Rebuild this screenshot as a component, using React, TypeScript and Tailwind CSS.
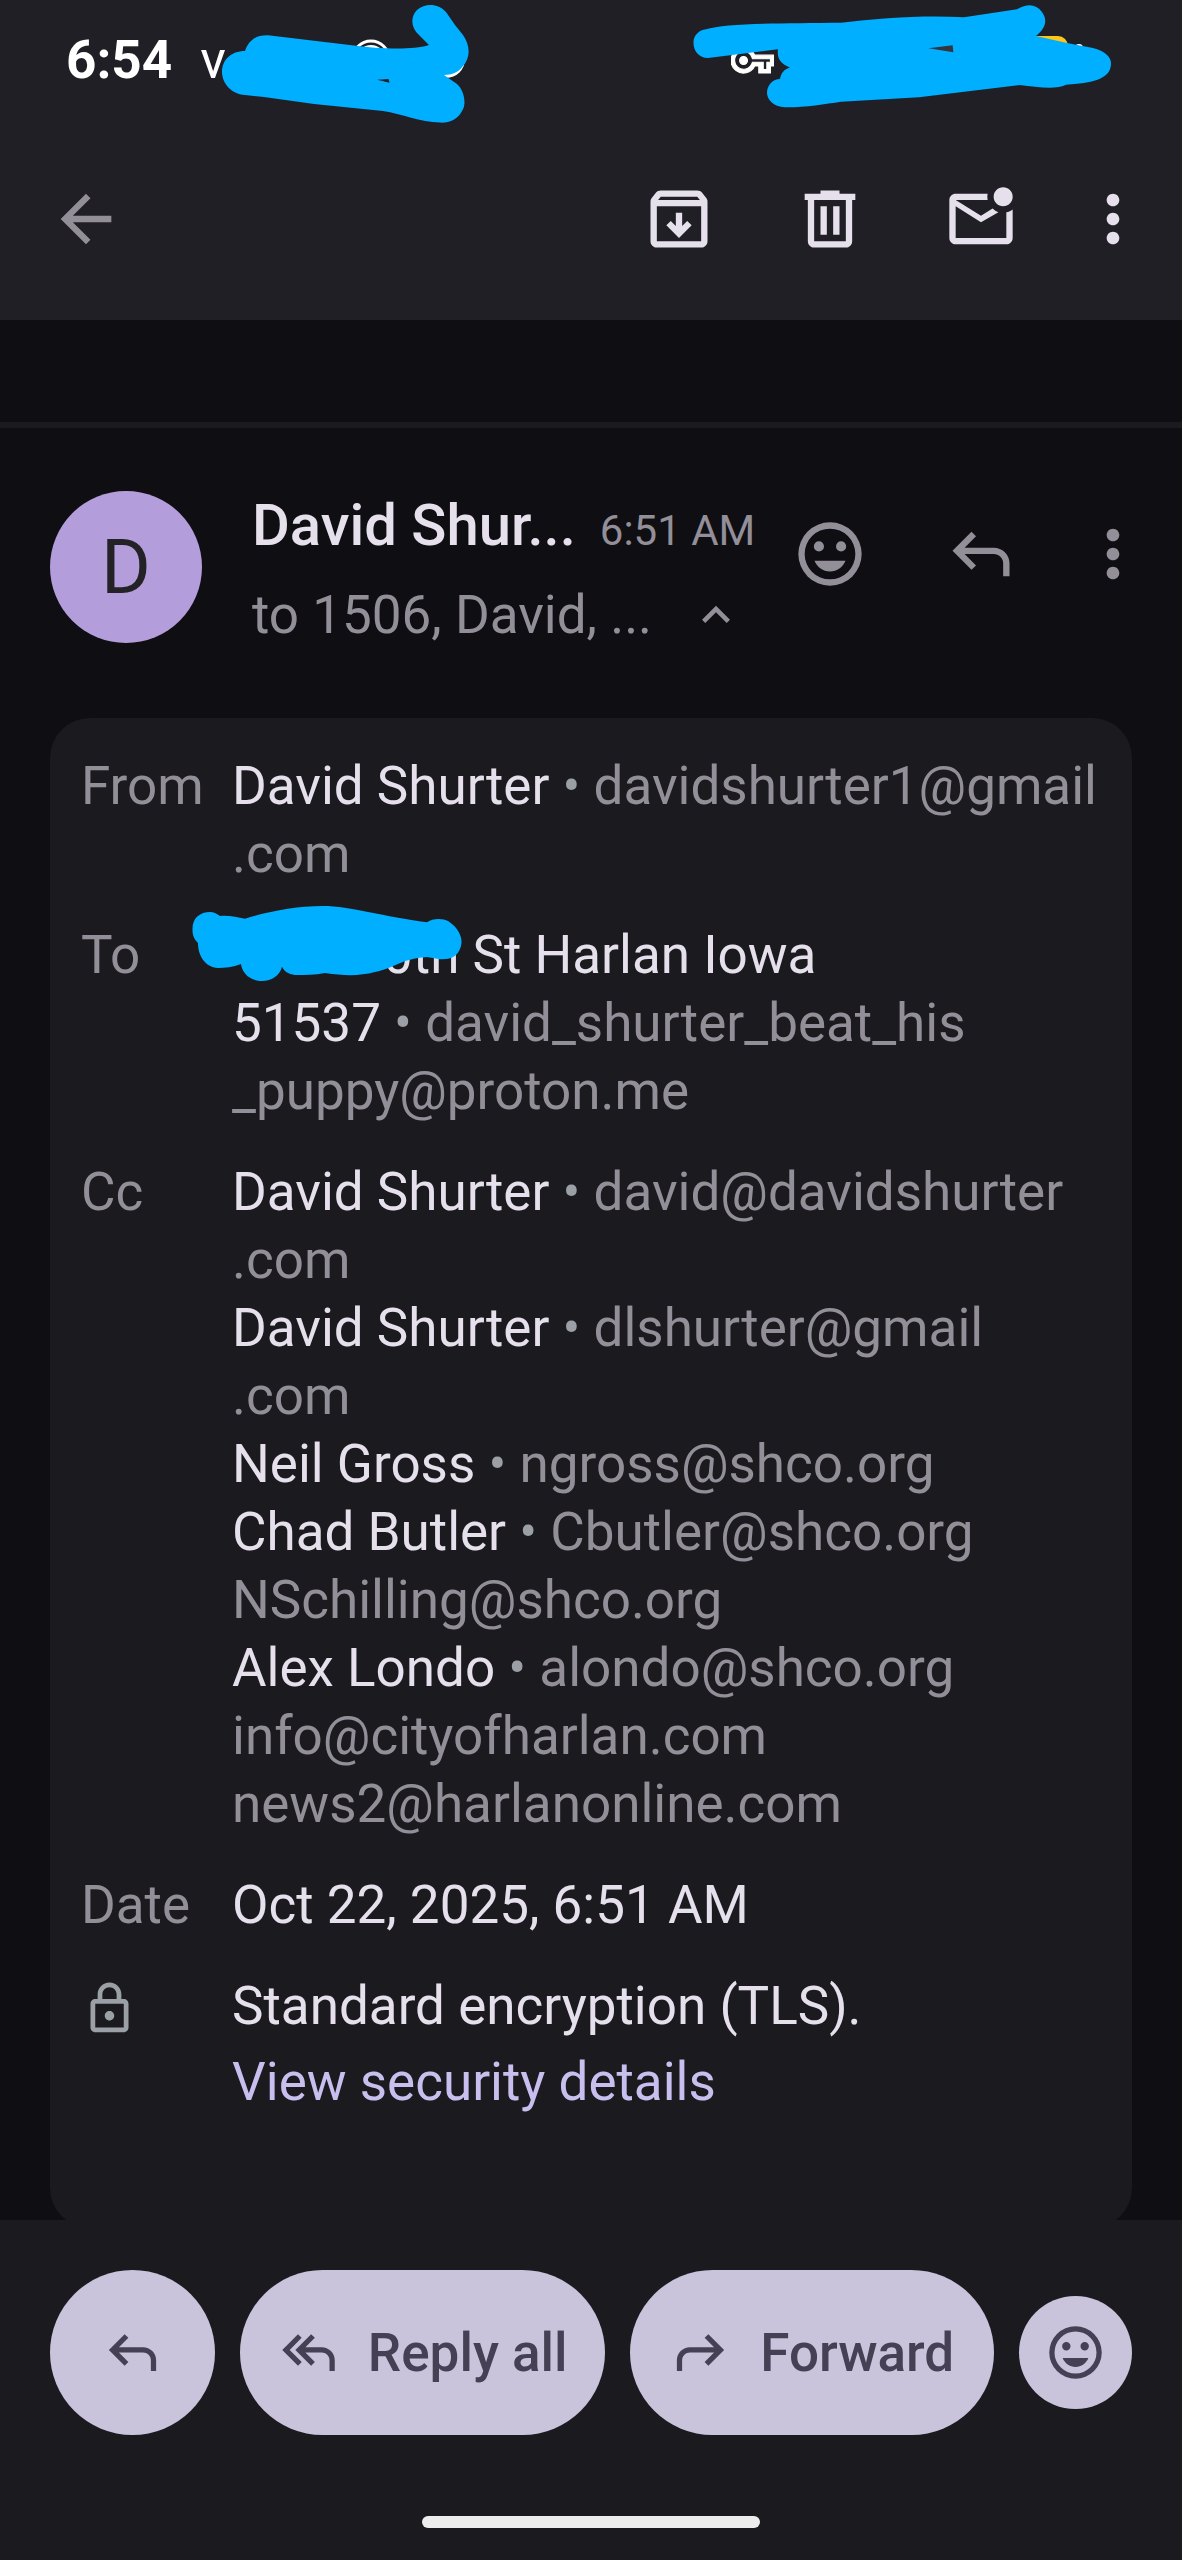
import type { ReactNode } from 'react'

interface IconProps {
  path: string
  className?: string
}

interface Contact {
  name?: string
  email: string
  rest?: string
}

const icons = {
  back: 'M20 11H7.83l5.59-5.59L12 4l-8 8 8 8 1.41-1.41L7.83 13H20v-2z',
  archive:
    'm12 18 4-4-1.4-1.4-1.6 1.6V10h-2v4.2l-1.6-1.6L8 14l4 4ZM5 8v11h14V8H5Zm0 13c-.55 0-1.02-.2-1.41-.59C3.2 20.02 3 19.55 3 19V6.53c0-.24.04-.46.11-.68.08-.22.19-.42.34-.6L4.7 3.73c.18-.23.41-.41.68-.54C5.65 3.06 5.94 3 6.25 3h11.5c.31 0 .6.06.88.19.27.13.5.31.67.54l1.25 1.52c.15.18.26.38.34.6.07.22.11.44.11.68V19c0 .55-.2 1.02-.59 1.41-.39.39-.86.59-1.41.59H5ZM5.4 6h13.2l-.85-1H6.25L5.4 6Z',
  trash:
    'M7 21c-.55 0-1.02-.2-1.41-.59C5.2 20.02 5 19.55 5 19V6H4V4h5V3h6v1h5v2h-1v13c0 .55-.2 1.02-.59 1.41-.39.39-.86.59-1.41.59H7ZM17 6H7v13h10V6ZM9 17h2V8H9v9Zm4 0h2V8h-2v9Z',
  unread:
    'M4 20c-.55 0-1.02-.2-1.41-.59C2.2 19.02 2 18.55 2 18V6c0-.55.2-1.02.59-1.41C2.98 4.2 3.45 4 4 4h10.1c-.07.33-.1.67-.1 1s.03.67.1 1H4l8 5 3.65-2.28c.27.24.55.46.86.65.31.19.64.34.99.46L12 13 4 8v10h16V9.9c.38-.08.74-.2 1.07-.35.34-.15.65-.33.93-.55v9c0 .55-.2 1.02-.59 1.41-.39.39-.86.59-1.41.59H4ZM19 8c-.83 0-1.54-.29-2.13-.88C16.29 6.54 16 5.83 16 5s.29-1.54.87-2.13C17.46 2.29 18.17 2 19 2s1.54.29 2.12.87C21.71 3.46 22 4.17 22 5s-.29 1.54-.88 2.12C20.54 7.71 19.83 8 19 8Z',
  more: 'M12 8c1.1 0 2-.9 2-2s-.9-2-2-2-2 .9-2 2 .9 2 2 2zm0 2c-1.1 0-2 .9-2 2s.9 2 2 2 2-.9 2-2-.9-2-2-2zm0 6c-1.1 0-2 .9-2 2s.9 2 2 2 2-.9 2-2-.9-2-2-2z',
  smile:
    'M12 2a10 10 0 1 0 0 20 10 10 0 0 0 0-20Zm0 18a8 8 0 1 1 0-16 8 8 0 0 1 0 16ZM8.5 8a1.6 1.6 0 1 0 0 3.2 1.6 1.6 0 0 0 0-3.2Zm7 0a1.6 1.6 0 1 0 0 3.2 1.6 1.6 0 0 0 0-3.2ZM7.1 14.1c.8 2 2.7 3.4 4.9 3.4s4.1-1.4 4.9-3.4H7.1Z',
  reply:
    'M19 19v-4c0-.83-.29-1.54-.88-2.13C17.54 12.29 16.83 12 16 12H6.83l3.6 3.6L9 17l-6-6 6-6 1.43 1.4L6.83 10H16c1.38 0 2.56.49 3.54 1.46C20.51 12.44 21 13.62 21 15v4h-2Z',
  replyAll:
    'm8 17-6-6 6-6 1.4 1.4L4.83 11l4.6 4.6L8 17ZM20 19v-4c0-.83-.29-1.54-.88-2.13C18.54 12.29 17.83 12 17 12h-6.17l3.6 3.6L13 17l-6-6 6-6 1.43 1.4-3.6 3.6H17c1.38 0 2.56.49 3.54 1.46C21.51 12.44 22 13.62 22 15v4h-2Z',
  collapse: 'm12 8-6 6 1.41 1.41L12 10.83l4.59 4.58L18 14z',
  lock: 'M18 8h-1V6c0-2.76-2.24-5-5-5S7 3.24 7 6v2H6c-1.1 0-2 .9-2 2v10c0 1.1.9 2 2 2h12c1.1 0 2-.9 2-2V10c0-1.1-.9-2-2-2zM9 6c0-1.66 1.34-3 3-3s3 1.34 3 3v2H9V6zm9 14H6V10h12v10zm-6-3c1.1 0 2-.9 2-2s-.9-2-2-2-2 .9-2 2 .9 2 2 2z',
}

const ccList: Contact[] = [
  { name: 'David Shurter', email: 'david@davidshurter', rest: '.com' },
  { name: 'David Shurter', email: 'dlshurter@gmail', rest: '.com' },
  { name: 'Neil Gross', email: 'ngross@shco.org' },
  { name: 'Chad Butler', email: 'Cbutler@shco.org' },
  { email: 'NSchilling@shco.org' },
  { name: 'Alex Londo', email: 'alondo@shco.org' },
  { email: 'info@cityofharlan.com' },
  { email: 'news2@harlanonline.com' },
]

function Icon({ path, className = 'size-[76px]' }: IconProps) {
  return (
    <svg viewBox="0 0 24 24" fill="currentColor" fillRule="evenodd" className={`shrink-0 ${className}`} aria-hidden="true">
      <path d={path} />
    </svg>
  )
}

function IconButton({ label, path }: { label: string; path: string }) {
  return (
    <button type="button" aria-label={label} className="shrink-0">
      <Icon path={path} />
    </button>
  )
}

function StatusBar() {
  return (
    <div className="relative flex h-[118px] items-start gap-7 pt-[26px] pl-[66px] text-[53px] leading-[68px] text-white">
      <span className="font-bold">6:54</span>
      <span>v</span>
      <svg viewBox="0 0 480 130" className="absolute top-0 left-0 h-[130px] w-[480px]" aria-hidden="true">
        <circle cx="371" cy="59" r="18" fill="none" stroke="#fff" strokeWidth="3" />
        <circle cx="371" cy="59" r="14" fill="#fff" />
        <circle cx="446" cy="59" r="19" fill="#fff" />
        <path
          d="M245 51C248 42 254 35 268 35.300L356 45.700C375 48 410 51 429 45L419 35C411 28 410 17 417 10C426 2 439 4 446 12L455 25L463 35C470 45 471 57 463 66C459 72 452 75 444 75L457 84C464 90 467 104 462 111C458 119 450 123 440 122.600C420 122 402 114 383 111L314 104L264 97L245 95C231 94 222 83 222 72C222 60 231 51 245 51Z"
          fill="#00afff"
        />
        <path d="M377 79.700L388.500 79L389.600 82.700Z" fill="#201f25" />
      </svg>
      <svg viewBox="690 0 430 120" className="absolute top-0 right-[62px] h-[120px] w-[430px]" aria-hidden="true">
        <svg x="731" y="39" width="43" height="43" viewBox="0 0 24 24">
          <path
            d="M22 19h-6.500v-4h-2.180A7 7 0 1 1 13.300 9H24v6h-2v4zm-4-2h2v-4h2v-2H11.940A5 5 0 1 0 11.700 13.670l.24-.67H18v4zM7 9.800a2.200 2.200 0 1 1 0 4.400 2.200 2.200 0 0 1 0-4.400z"
            fill="#fff"
            stroke="#fff"
            strokeWidth=".6"
            fillRule="evenodd"
          />
        </svg>
        <rect x="1010" y="36" width="58" height="40" rx="10" fill="#fcc61a" />
        <circle cx="1079" cy="48" r="4" fill="#fff" />
        <path
          d="M693.500 43C693 36 699 30 706 29.300C725 23 785 23.300 841 22.700C880 18 925 15 964 17.300L1017 9.300C1028 3 1036 4 1042 12C1047 19 1047 27 1036 36L1067 43L1093 48C1105 51 1111 57 1111 63.300C1111 77 1098 83 1066 84.700C1055 90 1038 87 1019.500 85L919 97.300L841 101.700C825 104 805 107.500 785 107.300C773 107 767 99 767 93C767 85 773 79 780 79C781 73 784 69 790 67.700C779 63 777 57 778 49.300L708 58C699 58 693.500 51 693.500 43Z"
          fill="#00afff"
        />
        <path d="M928.500 48.300L952.600 45.300L953.400 52.300Z" fill="#33363d" />
      </svg>
    </div>
  )
}

function DetailRow({ label, children }: { label: ReactNode; children: ReactNode }) {
  return (
    <div className="flex">
      <dt className="w-[151px] shrink-0 text-[#938f99]">{label}</dt>
      <dd className="min-w-0 flex-1 whitespace-nowrap text-[#e6e0ec]">{children}</dd>
    </div>
  )
}

function ContactLine({ name, email, rest }: Contact) {
  return (
    <div>
      {name ? (
        <>
          {name}
          <span className="text-[#9aa0a6]"> • </span>
        </>
      ) : null}
      <span className="text-[#938f99]">{email}</span>
      {rest ? <div className="text-[#938f99]">{rest}</div> : null}
    </div>
  )
}

function Scribble() {
  return (
    <svg viewBox="192 905 271 77" className="absolute -top-4 -left-10 h-[77px] w-[271px]" aria-hidden="true">
      <path
        d="M192.500 930C192 918 200 912 210 912C214 912 217 914 220 916C228 915 237 917 245 918.700C270 911 296 906 323 906C350 906 385 917 427 922.300C432 918 443 918 448 921C457 927 462 935 461.500 943C460 955 452 960 440 959.300L427 957C400 959 395 968 375 972C360 976 345 976 325 973C315 975 305 975 295 975C288 974 284 971 282 966.700C280 975 272 981 262 981C250 981 242 973 241 964C233 967 225 968 218 968C205 967 198 956 198 943C194 939 192.500 935 192.500 930Z"
        fill="#00afff"
      />
    </svg>
  )
}

export default function App() {
  return (
    <div className="flex min-h-screen flex-col overflow-x-hidden bg-[#0f0e13] font-[Roboto,sans-serif] text-[#e6e0ec]">
      <header className="bg-[#201f25]">
        <StatusBar />
        <div className="flex h-[202px] items-center pr-[31px] pl-12">
          <div className="flex flex-1 text-[#938f99]">
            <IconButton label="Back" path={icons.back} />
          </div>
          <div className="flex items-center gap-[75px]">
            <IconButton label="Archive" path={icons.archive} />
            <IconButton label="Delete" path={icons.trash} />
            <IconButton label="Mark unread" path={icons.unread} />
          </div>
          <div className="ml-14 flex">
            <IconButton label="More options" path={icons.more} />
          </div>
        </div>
      </header>

      <main className="flex flex-1 flex-col">
        <div className="mt-[102px] h-[6px] bg-[#1b1a1f]" />

        <section className="mt-[63px] flex h-[152px] items-start pr-[31px] pl-[50px] text-[#938f99]">
          <div className="flex size-[152px] shrink-0 items-center justify-center rounded-full bg-[#b39ddb] text-[76px] leading-none text-[#232227]">
            D
          </div>
          <div className="ml-[50px] min-w-0 flex-1 whitespace-nowrap">
            <div className="flex items-baseline gap-6 leading-[68px]">
              <h1 className="text-[58px] font-medium text-[#e6e0ec]">David Shur...</h1>
              <time className="text-[42px]">6:51 AM</time>
            </div>
            <button type="button" className="mt-4 flex items-center gap-9 text-[53px] leading-[68px]">
              to 1506, David, ...
              <Icon path={icons.collapse} className="size-14" />
            </button>
          </div>
          <div className="mt-[25px] flex gap-[75px]">
            <IconButton label="Add reaction" path={icons.smile} />
            <IconButton label="Reply" path={icons.reply} />
          </div>
          <div className="mt-[25px] ml-14 flex">
            <IconButton label="More" path={icons.more} />
          </div>
        </section>

        <dl className="mx-[50px] mt-[75px] flex flex-1 flex-col gap-[33px] rounded-[40px] bg-[#1b1a1f] px-[31px] pt-[34px] pb-28 text-[53px] leading-[68px]">
          <DetailRow label="From">
            <ContactLine name="David Shurter" email="davidshurter1@gmail" rest=".com" />
          </DetailRow>
          <DetailRow label="To">
            <div className="relative">
              <span className="inline-block w-[151px]">1</span>
              0th St Harlan Iowa
              <Scribble />
            </div>
            <ContactLine name="51537" email="david_shurter_beat_his" rest="_puppy@proton.me" />
          </DetailRow>
          <DetailRow label="Cc">
            {ccList.map((contact) => (
              <ContactLine key={contact.email} {...contact} />
            ))}
          </DetailRow>
          <DetailRow label="Date">Oct 22, 2025, 6:51 AM</DetailRow>
          <DetailRow label={<Icon path={icons.lock} className="mt-2 size-[57px] text-[#9aa0a6]" />}>
            <div>Standard encryption (TLS).</div>
            <a href="#security" className="mt-2 block text-[#c8bfee]">
              View security details
            </a>
          </DetailRow>
        </dl>
      </main>

      <footer className="relative -mt-2 bg-[#1b1a1f] px-[50px] pt-[50px] pb-8">
        <div className="flex items-center gap-[25px] text-[53px] leading-[68px] font-medium text-[#464054]">
          <button type="button" aria-label="Reply" className="flex size-[165px] shrink-0 items-center justify-center rounded-full bg-[#c9c3dc]">
            <Icon path={icons.reply} className="size-[63px]" />
          </button>
          <button type="button" className="flex h-[165px] flex-1 items-center justify-center gap-7 rounded-full bg-[#c9c3dc] whitespace-nowrap">
            <Icon path={icons.replyAll} className="size-[63px]" />
            Reply all
          </button>
          <button type="button" className="flex h-[165px] flex-1 items-center justify-center gap-7 rounded-full bg-[#c9c3dc] whitespace-nowrap">
            <Icon path={icons.reply} className="size-[63px] -scale-x-100" />
            Forward
          </button>
          <button type="button" aria-label="Add reaction" className="flex size-[113px] shrink-0 items-center justify-center rounded-full bg-[#c9c3dc]">
            <Icon path={icons.smile} className="size-[63px]" />
          </button>
        </div>
        <div className="mx-auto mt-[81px] h-3 w-[338px] rounded-full bg-[#ededed]" />
      </footer>
    </div>
  )
}
